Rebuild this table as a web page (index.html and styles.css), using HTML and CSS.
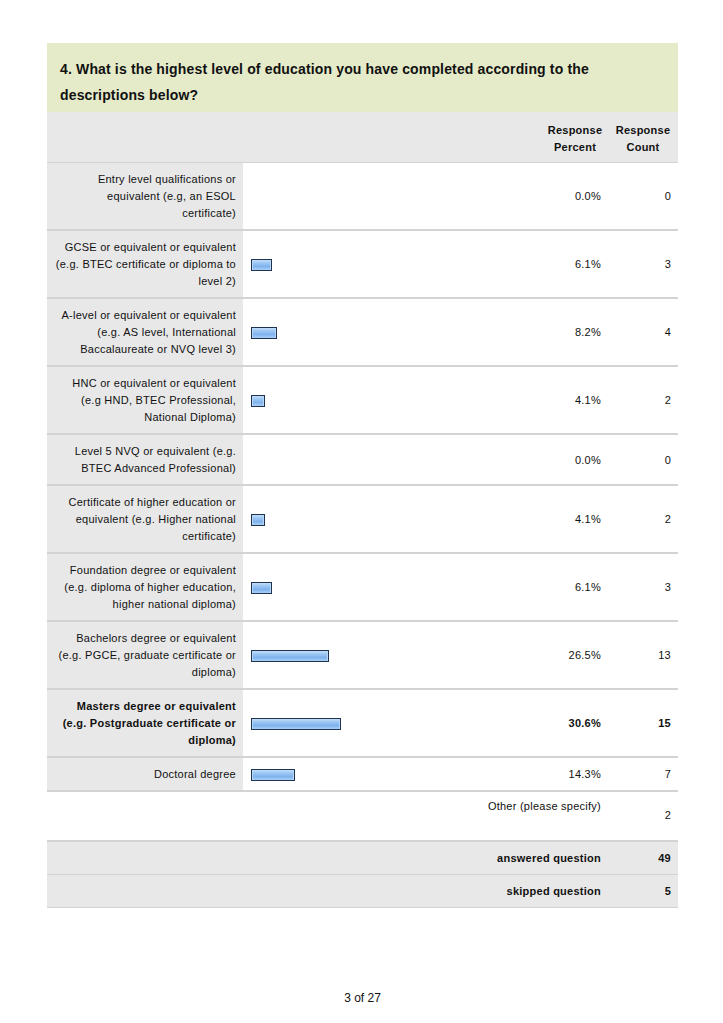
FILE: index.html
```html
<!DOCTYPE html>
<html>
<head>
<meta charset="utf-8">
<link rel="stylesheet" href="styles.css">
</head>
<body>
<div class="page">
  <div class="question">4. What is the highest level of education you have completed according to the descriptions below?</div>
  <table class="results">
    <colgroup>
      <col class="c-label"><col class="c-bar"><col class="c-pct"><col class="c-count">
    </colgroup>
    <thead>
      <tr class="head">
        <th></th><th></th>
        <th class="h">Response Percent</th>
        <th class="h">Response Count</th>
      </tr>
    </thead>
    <tbody>
      <tr><td class="label">Entry level qualifications or equivalent (e.g, an ESOL certificate)</td><td class="barcell"></td><td class="num">0.0%</td><td class="num">0</td></tr>
      <tr><td class="label">GCSE or equivalent or equivalent (e.g. BTEC certificate or diploma to level 2)</td><td class="barcell"><div class="bar" style="width:21px"></div></td><td class="num">6.1%</td><td class="num">3</td></tr>
      <tr><td class="label">A-level or equivalent or equivalent (e.g. AS level, International Baccalaureate or NVQ level 3)</td><td class="barcell"><div class="bar" style="width:26px"></div></td><td class="num">8.2%</td><td class="num">4</td></tr>
      <tr><td class="label">HNC or equivalent or equivalent (e.g HND, BTEC Professional, National Diploma)</td><td class="barcell"><div class="bar" style="width:14px"></div></td><td class="num">4.1%</td><td class="num">2</td></tr>
      <tr><td class="label">Level 5 NVQ or equivalent (e.g. BTEC Advanced Professional)</td><td class="barcell"></td><td class="num">0.0%</td><td class="num">0</td></tr>
      <tr><td class="label">Certificate of higher education or equivalent (e.g. Higher national certificate)</td><td class="barcell"><div class="bar" style="width:14px"></div></td><td class="num">4.1%</td><td class="num">2</td></tr>
      <tr><td class="label">Foundation degree or equivalent (e.g. diploma of higher education, higher national diploma)</td><td class="barcell"><div class="bar" style="width:21px"></div></td><td class="num">6.1%</td><td class="num">3</td></tr>
      <tr><td class="label">Bachelors degree or equivalent (e.g. PGCE, graduate certificate or diploma)</td><td class="barcell"><div class="bar" style="width:78px"></div></td><td class="num">26.5%</td><td class="num">13</td></tr>
      <tr class="top"><td class="label">Masters degree or equivalent (e.g. Postgraduate certificate or diploma)</td><td class="barcell"><div class="bar" style="width:90px"></div></td><td class="num">30.6%</td><td class="num">15</td></tr>
      <tr><td class="label">Doctoral degree</td><td class="barcell"><div class="bar" style="width:44px"></div></td><td class="num">14.3%</td><td class="num">7</td></tr>
      <tr class="other"><td class="blank"></td><td class="blank"></td><td class="other-label">Other (please specify)</td><td class="other-count">2</td></tr>
      <tr class="summary"><td colspan="3" class="sum-label">answered question</td><td class="sum-num">49</td></tr>
      <tr class="summary"><td colspan="3" class="sum-label">skipped question</td><td class="sum-num">5</td></tr>
    </tbody>
  </table>
  <div class="footer">3 of 27</div>
</div>
</body>
</html>
```

FILE: styles.css
```css
html, body {
  margin: 0;
  padding: 0;
  background: #ffffff;
}
body {
  font-family: "Liberation Sans", Arial, sans-serif;
  color: #111111;
}
.page {
  width: 631px;
  margin: 0 0 0 47px;
  padding-top: 43px;
}
.question {
  background: #e5ebc9;
  font-size: 14px;
  font-weight: bold;
  letter-spacing: 0.15px;
  line-height: 26px;
  padding: 13px 20px 4px 13px;
  color: #111111;
}
.results {
  width: 631px;
  border-collapse: collapse;
  table-layout: fixed;
  font-size: 11px;
  letter-spacing: 0.25px;
  line-height: 17px;
}
.c-label { width: 196px; }
.c-bar { width: 299px; }
.c-pct { width: 66px; }
.c-count { width: 70px; }
.results td, .results th {
  padding: 8px 7px 7px 7px;
  border-bottom: 2px solid #d3d3d3;
  vertical-align: middle;
}
.results th {
  background: #e8e8e8;
  font-weight: bold;
  text-align: center;
  padding: 10px 4px 6px 4px;
  border-bottom-width: 1px;
}
.results td.label {
  background: #e8e8e8;
  text-align: right;
  padding-left: 8px;
}
.results td.barcell {
  padding-left: 8px;
}
.bar {
  box-sizing: border-box;
  height: 12px;
  border: 1px solid #1e3350;
  background: linear-gradient(to bottom, #c3def9 0%, #9cc7f5 30%, #7fb3ee 65%, #a9cff7 100%);
  box-shadow: inset 1px 0 0 #b9d8f8, inset -1px 0 0 #b9d8f8;
}
.num {
  text-align: right;
}
.top td {
  font-weight: bold;
}
.results .other td {
  vertical-align: top;
  padding-top: 6px;
  padding-bottom: 25px;
}
.results td.other-label {
  text-align: right;
  white-space: nowrap;
  direction: rtl;
}
.results td.other-count {
  text-align: right;
  padding-top: 15px;
  padding-bottom: 16px;
}
.results .summary td {
  background: #e8e8e8;
  font-weight: bold;
  text-align: right;
  padding: 8px 7px 7px 7px;
  border-bottom: 1px solid #d3d3d3;
}
.footer {
  text-align: center;
  font-size: 12px;
  margin-top: 83px;
  color: #111111;
}
```
